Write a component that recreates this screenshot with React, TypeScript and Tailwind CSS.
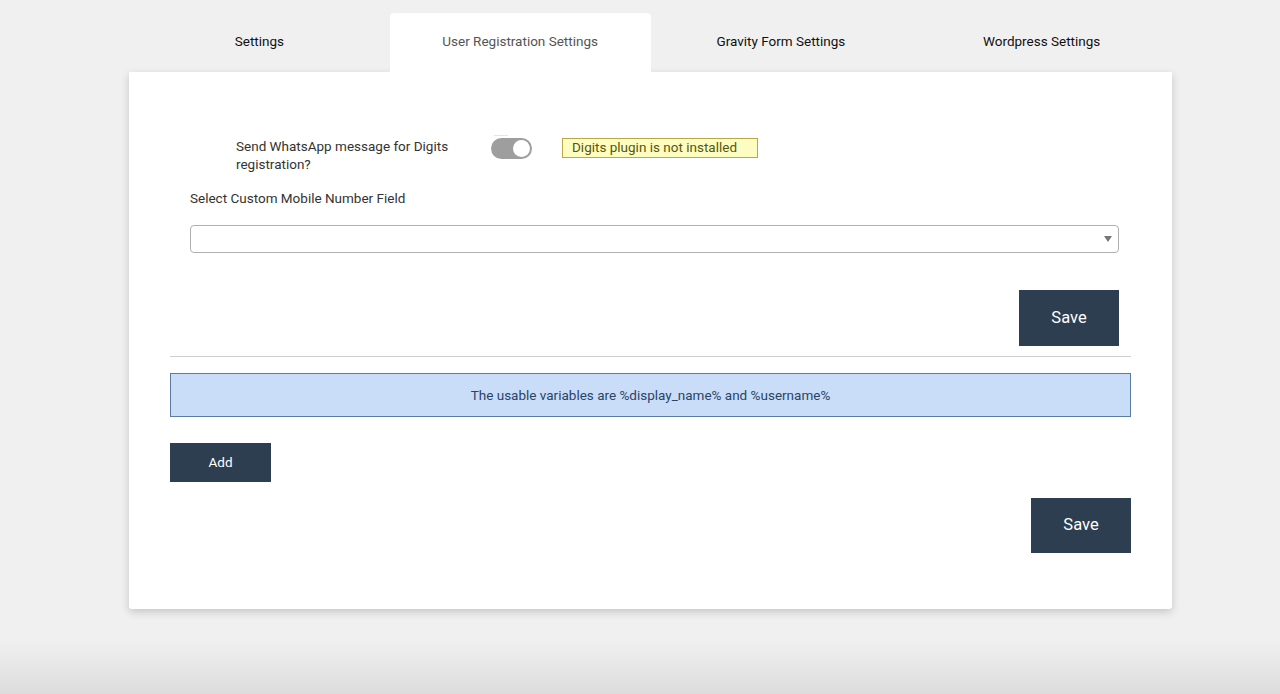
import React from 'react';

const tabs = ['Settings', 'User Registration Settings', 'Gravity Form Settings', 'Wordpress Settings'];

export default function App() {
  const active = 1;

  return (
    <div className="min-h-[694px] bg-[linear-gradient(to_bottom,#f0f0f0_0px,#f0f0f0_640px,#dcdcdc_694px)] font-['Roboto',sans-serif] text-[#333]">
      <div className="ml-[129px] w-[1043px] pt-[13px]">
        <div className="flex">
          {tabs.map((t, i) => (
            <div
              key={t}
              className={
                i === active
                  ? 'flex h-[59px] flex-1 items-center justify-center rounded-t-[4px] bg-white pb-[2px] text-[13.5px] text-[#555]'
                  : 'flex h-[59px] flex-1 items-center justify-center pb-[2px] text-[13.5px] text-[#111]'
              }
            >
              {t}
            </div>
          ))}
        </div>

        <div className="rounded-b-[3px] bg-white px-[41px] pb-[56px] pt-[63px] shadow-[0_3px_8px_rgba(0,0,0,0.18)]">
          <div className="pl-[20px] pr-[12px]">
            <div className="flex items-start pl-[46px]">
              <div className="w-[232px] pt-[2px] text-[13.5px] leading-[18px] text-[#333]">
                Send WhatsApp message for Digits registration?
              </div>
              <div className="ml-[23px] flex flex-col">
                <div className="ml-[3px] h-px w-[14px] bg-[#e6e6e6]" />
                <div className="mt-[2px] flex h-[21px] w-[41px] items-center justify-end rounded-full bg-[#9e9e9e] px-[2px]">
                  <div className="h-[17px] w-[17px] rounded-full bg-white" />
                </div>
              </div>
              <div className="ml-[30px] mt-[3px] flex h-[20px] w-[196px] items-center border border-[#b8a848] bg-[#fdfdc2] pb-[2px] pl-[9px] text-[13.5px] text-[#59560c]">
                Digits plugin is not installed
              </div>
            </div>

            <div className="mt-[17px] text-[13.5px] leading-[16px] text-[#333]">Select Custom Mobile Number Field</div>

            <div className="mt-[19px] flex h-[28px] items-center justify-end rounded-[4px] border border-[#b0b0b0] bg-white pr-[6px]">
              <svg width="8" height="6" viewBox="0 0 8 6">
                <path d="M0 0 L8 0 L4 6 Z" fill="#777" />
              </svg>
            </div>

            <div className="mt-[37px] flex justify-end">
              <button className="h-[56px] w-[100px] bg-[#2c3e50] text-[16.5px] text-white">Save</button>
            </div>
          </div>

          <div className="mt-[10px] h-px bg-[#cfcfcf]" />

          <div className="mt-[16px] flex h-[44px] items-center justify-center border border-[#5b7ba3] bg-[#c9ddf9] text-[13.5px] text-[#2a4468]">
            The usable variables are %display_name% and %username%
          </div>

          <div className="mt-[26px]">
            <button className="h-[39px] w-[101px] bg-[#2c3e50] text-[13.5px] text-white">Add</button>
          </div>

          <div className="mt-[16px] flex justify-end">
            <button className="h-[55px] w-[100px] bg-[#2c3e50] text-[16.5px] text-white">Save</button>
          </div>
        </div>
      </div>
    </div>
  );
}
